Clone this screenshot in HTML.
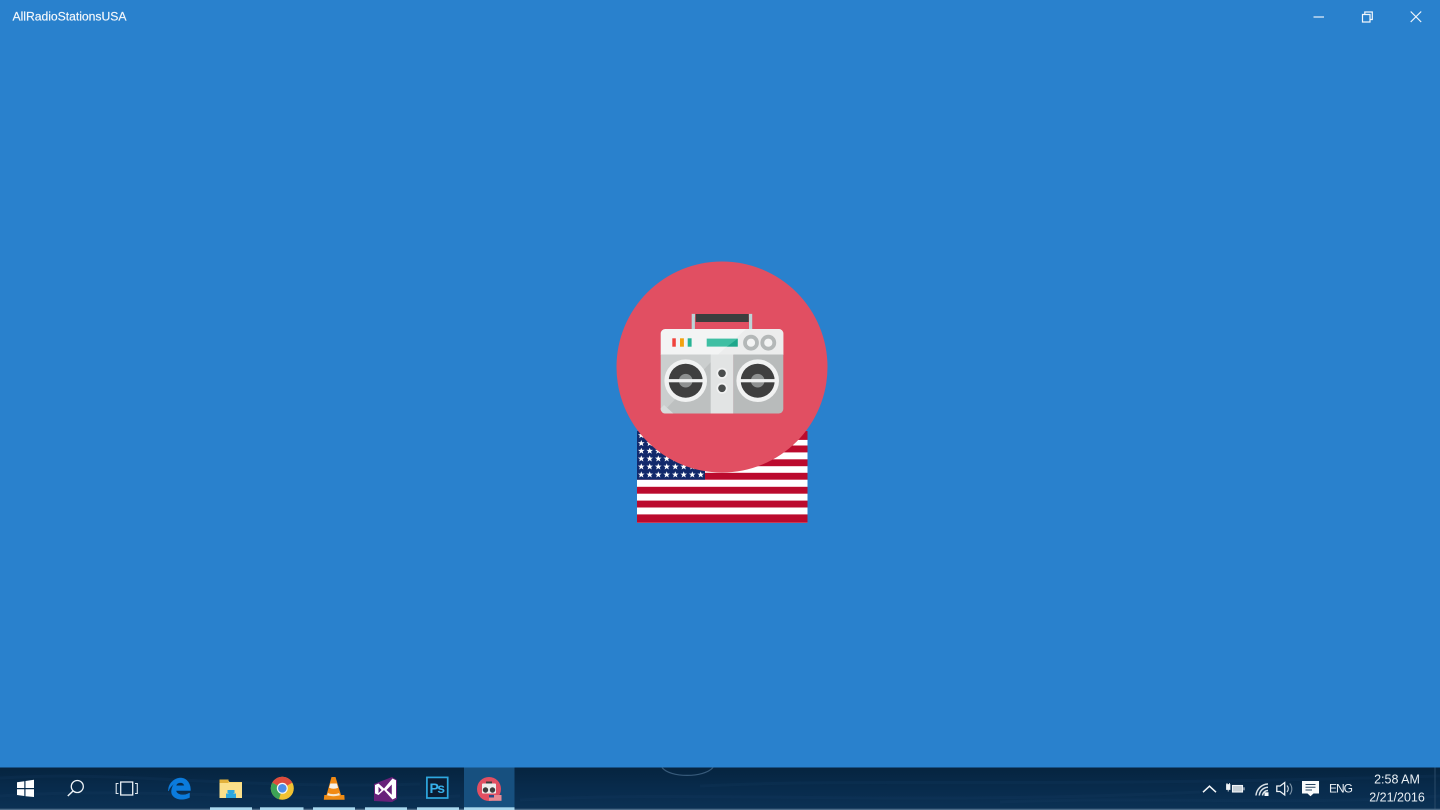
<!DOCTYPE html>
<html lang="en">
<head>
<meta charset="utf-8">
<title>AllRadioStationsUSA</title>
<style>
html,body{margin:0;padding:0;width:1440px;height:810px;overflow:hidden;background:#2981cd}
svg{display:block;position:absolute;left:0;top:0;filter:blur(.35px)}
text{font-family:"Liberation Sans",sans-serif}
</style>
</head>
<body>
<svg width="1440" height="810" viewBox="0 0 1440 810" xmlns="http://www.w3.org/2000/svg">
<defs>
<linearGradient id="tb" x1="0" y1="0" x2="0" y2="1">
<stop offset="0" stop-color="#06243f"/><stop offset=".5" stop-color="#082b4c"/><stop offset="1" stop-color="#0b3154"/>
</linearGradient>
<polygon id="s" points="0,-3.300 .9,-1.100 3.300,-1.100 1.400,.4 2.100,2.800 0,1.400 -2.100,2.800 -1.400,.4 -3.300,-1.100 -.9,-1.100" fill="#fff"/>
<g id="row"><use href="#s" x="641.300"/><use href="#s" x="649.700"/><use href="#s" x="658.300"/><use href="#s" x="666.700"/><use href="#s" x="675.300"/><use href="#s" x="683.700"/><use href="#s" x="692.300"/><use href="#s" x="700.700"/></g>
<g id="spk">
<circle r="21.300" fill="#f1f2f2"/><circle r="17" fill="#3f3f3f"/><circle r="6.800" fill="#8e9090"/>
<rect x="-19" y="-1.600" width="38" height="3.200" fill="#f1f2f2"/>
</g>
</defs>

<rect width="1440" height="810" fill="#2981cd"/>

<!-- title bar -->
<text x="12.500" y="20.500" font-size="12.200" fill="#f4f8fc" stroke="#f4f8fc" stroke-width=".15" textLength="114">AllRadioStationsUSA</text>
<path d="M1313.500 17h10.500" stroke="#e8f1fa" stroke-width="1.200" fill="none"/>
<path d="M1362.500 14.500h7.500v7.500h-7.500zM1364.800 14.500v-2.500h7.500v7.500h-2.300" stroke="#f2f7fc" stroke-width="1.200" fill="none"/>
<path d="M1410.700 11.500l10.500 10.500M1421.200 11.500l-10.500 10.500" stroke="#f2f7fc" stroke-width="1.200" fill="none"/>

<!-- flag -->
<rect x="637" y="431" width="170.500" height="92" fill="#fff"/>
<g fill="#bb0a2d">
<rect x="637" y="431" width="170.500" height="8.900"/><rect x="637" y="445.500" width="170.500" height="6.900"/><rect x="637" y="459.300" width="170.500" height="6.900"/><rect x="637" y="472.800" width="170.500" height="6.900"/><rect x="637" y="486.800" width="170.500" height="6.900"/><rect x="637" y="500.600" width="170.500" height="6.900"/><rect x="637" y="514.400" width="170.500" height="8.400"/>
</g>
<rect x="637" y="431" width="68" height="48.700" fill="#12296b"/>
<use href="#row" y="474.700"/><use href="#row" y="466.700"/><use href="#row" y="458.700"/><use href="#row" y="451"/><use href="#row" y="443.300"/><use href="#row" y="435.300"/>

<!-- circle -->
<circle cx="722" cy="367" r="105.500" fill="#e14f62"/>

<!-- boombox -->
<path d="M693.300 329v-13.500h1.700M750.600 329v-13.500h-1.700" stroke="#bcd4d7" stroke-width="3.200" fill="none"/>
<rect x="695.700" y="314" width="53" height="8" fill="#3b3e3e"/>
<clipPath id="bb"><rect x="660.700" y="329" width="122.600" height="84.500" rx="4.500"/></clipPath>
<g clip-path="url(#bb)">
<rect x="660" y="329" width="124" height="26" fill="#f3f4f4"/>
<rect x="660" y="354.500" width="51" height="60" fill="#cbcece"/>
<path d="M661 414L711 362V414z" fill="#bdc0c0"/>
<path d="M660 414V409L664 405 674 414z" fill="#d8dcdc"/>
<rect x="710.700" y="354.500" width="22.700" height="60" fill="#e2e4e4"/>
<rect x="733.300" y="354.500" width="51" height="60" fill="#b8bbbb"/>
<path d="M746 329H784V354.500H718z" fill="#eceded"/>
</g>
<rect x="672.300" y="338.300" width="3.500" height="8.400" fill="#f0423c"/>
<rect x="680" y="338.300" width="3.900" height="8.400" fill="#f2a20f"/>
<rect x="687.700" y="338.300" width="3.900" height="8.400" fill="#27b394"/>
<rect x="706.700" y="338.600" width="31" height="8" fill="#3fbfa3"/>
<path d="M737.700 338.600v8H727z" fill="#1ea78b"/>
<circle cx="751" cy="342.700" r="6" fill="#f3f4f4" stroke="#b4b8b8" stroke-width="3.800"/>
<circle cx="768.300" cy="342.700" r="6" fill="#f3f4f4" stroke="#b4b8b8" stroke-width="3.800"/>
<use href="#spk" x="685.700" y="380.700"/>
<use href="#spk" x="757.700" y="380.700"/>
<circle cx="722" cy="373.300" r="5.500" fill="#f1f2f2"/><circle cx="722" cy="373.300" r="3.800" fill="#4a4d4d"/>
<circle cx="722" cy="388.300" r="5.500" fill="#f1f2f2"/><circle cx="722" cy="388.300" r="3.800" fill="#4a4d4d"/>

<!-- taskbar -->
<rect x="0" y="767.500" width="1440" height="42.500" fill="url(#tb)"/>
<g fill="none" stroke="#1c4468" stroke-width="3" opacity=".18">
<path d="M0 778C120 770 240 790 420 784M0 796C150 786 300 804 460 796M520 800C700 790 900 806 1200 792M700 786C860 778 1040 788 1440 776M1000 802C1160 796 1300 806 1440 796"/>
</g>
<path d="M662 767.500C670 778 704 778 713 767.500" fill="none" stroke="#375a7a" stroke-width="1.200"/>
<rect x="464" y="767.500" width="50.500" height="42.500" fill="#17507f"/>
<rect x="1434.500" y="767.500" width="1" height="42.500" fill="#2a4a68"/>
<rect x="0" y="808.700" width="1440" height="1.300" fill="#4d6c88"/>
<g fill="#a9d8ee">
<rect x="210" y="807.300" width="42" height="2.700"/><rect x="260" y="807.300" width="43.500" height="2.700"/><rect x="313" y="807.300" width="42" height="2.700"/><rect x="365" y="807.300" width="42" height="2.700"/><rect x="417" y="807.300" width="42" height="2.700"/><rect x="464" y="807.300" width="50.500" height="2.700"/>
</g>

<!-- start -->
<g fill="#fff">
<polygon points="17,782.300 24.300,781.200 24.300,788 17,788"/>
<polygon points="25.500,781 34,779.800 34,788 25.500,788"/>
<polygon points="17,789.200 24.300,789.200 24.300,796 17,795"/>
<polygon points="25.500,789.200 34,789.200 34,797 25.500,796.200"/>
</g>
<!-- search -->
<circle cx="77.300" cy="786.500" r="6" fill="none" stroke="#eef3f7" stroke-width="1.300"/>
<path d="M73 791L67.800 796" stroke="#eef3f7" stroke-width="1.500"/>
<!-- task view -->
<path d="M120.700 782h12v13h-12z" fill="none" stroke="#eef3f7" stroke-width="1.300"/>
<path d="M118.500 783.500h-2.300v10h2.300M135 783.500h2.300v10H135" fill="none" stroke="#dfe7ee" stroke-width="1.100"/>

<!-- edge -->
<path d="M168.500 791C168 783 175 778 180.500 778C186.500 778 190.500 783 190.500 790.500H176C176.500 795 184 796.500 189.500 793V797.500C181 801.500 171 798.500 171.500 791C172 787 173 785 175 783.500C172 785 169.500 788 168.500 791ZM176 785.800H184.200C184.200 781.500 176.800 781.500 176 785.800Z" fill="#0b7bdc" fill-rule="evenodd" stroke="#0b7bdc" stroke-width=".5"/>

<!-- explorer -->
<path d="M219.500 779.500h8l2 2.500h12.500v16h-22.500z" fill="#f7d774"/>
<rect x="219.500" y="779.500" width="9" height="3.500" fill="#e3b23c"/>
<rect x="219.500" y="783" width="22.500" height="15" fill="#fbe08a"/>
<path d="M226 798v-4.500h2.500a2.500 2.500 0 0 1 5 0H236V798z" fill="#2ba7e0"/>
<rect x="227.500" y="790" width="7" height="3" fill="#2ba7e0"/>

<!-- chrome -->
<circle cx="282.300" cy="788.300" r="11.500" fill="#f1c232"/>
<path d="M282.300 788.300L272.300 782.600A11.500 11.500 0 0 1 292.300 782.600Z" fill="#dd4b3e"/>
<path d="M282.300 788.300L272.300 782.600A11.500 11.500 0 0 0 279 799.300Z" fill="#3da356"/>
<circle cx="282.300" cy="788.300" r="5.500" fill="#f4f6f8"/>
<circle cx="282.300" cy="788.300" r="4.300" fill="#4d8ee8"/>

<!-- vlc -->
<polygon points="331.500,777 335.500,777 341,795 326.500,795" fill="#f18a14"/>
<path d="M330.300 783.500h6.500l1.300 4.300c-3 1.300-6 1.300-9 0z" fill="#f4f1ea"/>
<path d="M324.300 795h20l.3 4.700h-20.800z" fill="#ef8b14"/>
<path d="M328 793c3 1.500 8 1.500 11 0l1 2.300c-4 1.200-9 1.200-13 0z" fill="#f6e6cf"/>

<!-- visual studio -->
<polygon points="374,784 392,777 397,780 397,799 392,802 374,801" fill="#68217a"/>
<path d="M375 785l3.500-1.500 5.500 5 8.500-10 3.500 1.800v17.400l-3.500 1.800-8.500-9.500-5.500 5-3.500-1.500zM378.500 786.800v6.300l3.100-3.100zM391.800 784.500l-5.300 5.500 5.300 4.800z" fill="#fff" fill-rule="evenodd"/>

<!-- photoshop -->
<rect x="426.900" y="777.400" width="20.800" height="20.600" fill="#0b1c33" stroke="#2ea8e0" stroke-width="1.700"/>
<text x="429.500" y="793" font-size="14" font-weight="bold" fill="#36b0ea" textLength="15.500">Ps</text>

<!-- app -->
<circle cx="489" cy="789" r="12" fill="#e14f62"/>
<rect x="482" y="783.500" width="14" height="10" rx="1" fill="#eceded"/>
<rect x="486" y="781.500" width="6" height="2" fill="#3b3e3e"/>
<circle cx="485.500" cy="790" r="2.700" fill="#3c3c3c"/>
<circle cx="492.500" cy="790" r="2.700" fill="#3c3c3c"/>
<rect x="489" y="795" width="12.500" height="5.800" fill="#e98a93"/>
<rect x="489" y="795" width="5" height="2.500" fill="#2a4a87"/>

<!-- tray -->
<path d="M1203 792.200l6.500-6 6.500 6" fill="none" stroke="#f3f6f9" stroke-width="1.500"/>
<path d="M1226.500 784.500h3.500v5h-3.500zM1228.200 789.500v2M1227 784.500v-1.500M1229.500 784.500v-1.500" fill="#f1f4f7" stroke="#f1f4f7" stroke-width=".8"/>
<rect x="1232.500" y="785.500" width="10" height="6.500" fill="#c6cfd6" stroke="#f1f4f7" stroke-width="1.100"/>
<rect x="1243.500" y="787.300" width="1" height="3" fill="#dfe5ea"/>
<path d="M1256 795.500a12.500 12.500 0 0 1 12-11.500M1259.300 795.500a9 9 0 0 1 8.700-8.300M1262.500 795.500a5.500 5.500 0 0 1 5.500-5" fill="none" stroke="#d8e0e6" stroke-width="1.500"/>
<rect x="1264.500" y="792.300" width="4" height="3.700" fill="#f7f9fb"/>
<path d="M1276.800 786h3.300l4.600-3.500v12.500l-4.600-3.500h-3.300z" fill="none" stroke="#eef2f6" stroke-width="1.300"/>
<path d="M1287 785.500c1.600 2 1.600 4.500 0 6.500" fill="none" stroke="#c9d3db" stroke-width="1.200"/>
<path d="M1289.700 783.500c2.800 3.200 2.800 7.800 0 11" fill="none" stroke="#7f95a8" stroke-width="1.100"/>
<path d="M1302 781h17v12.500h-5.500l-3 2.700-3-2.700h-5.500z" fill="#f8fafb"/>
<path d="M1305.500 784.500h10M1305.500 787.300h10M1305.500 790h6.500" stroke="#274561" stroke-width="1"/>
<text x="1341" y="792.500" font-size="12" fill="#eaf0f5" text-anchor="middle" textLength="24">ENG</text>
<text x="1397" y="783.500" font-size="12.500" fill="#eaf0f5" text-anchor="middle">2:58 AM</text>
<text x="1397" y="801.500" font-size="12.500" fill="#eaf0f5" text-anchor="middle">2/21/2016</text>
</svg>
</body>
</html>
